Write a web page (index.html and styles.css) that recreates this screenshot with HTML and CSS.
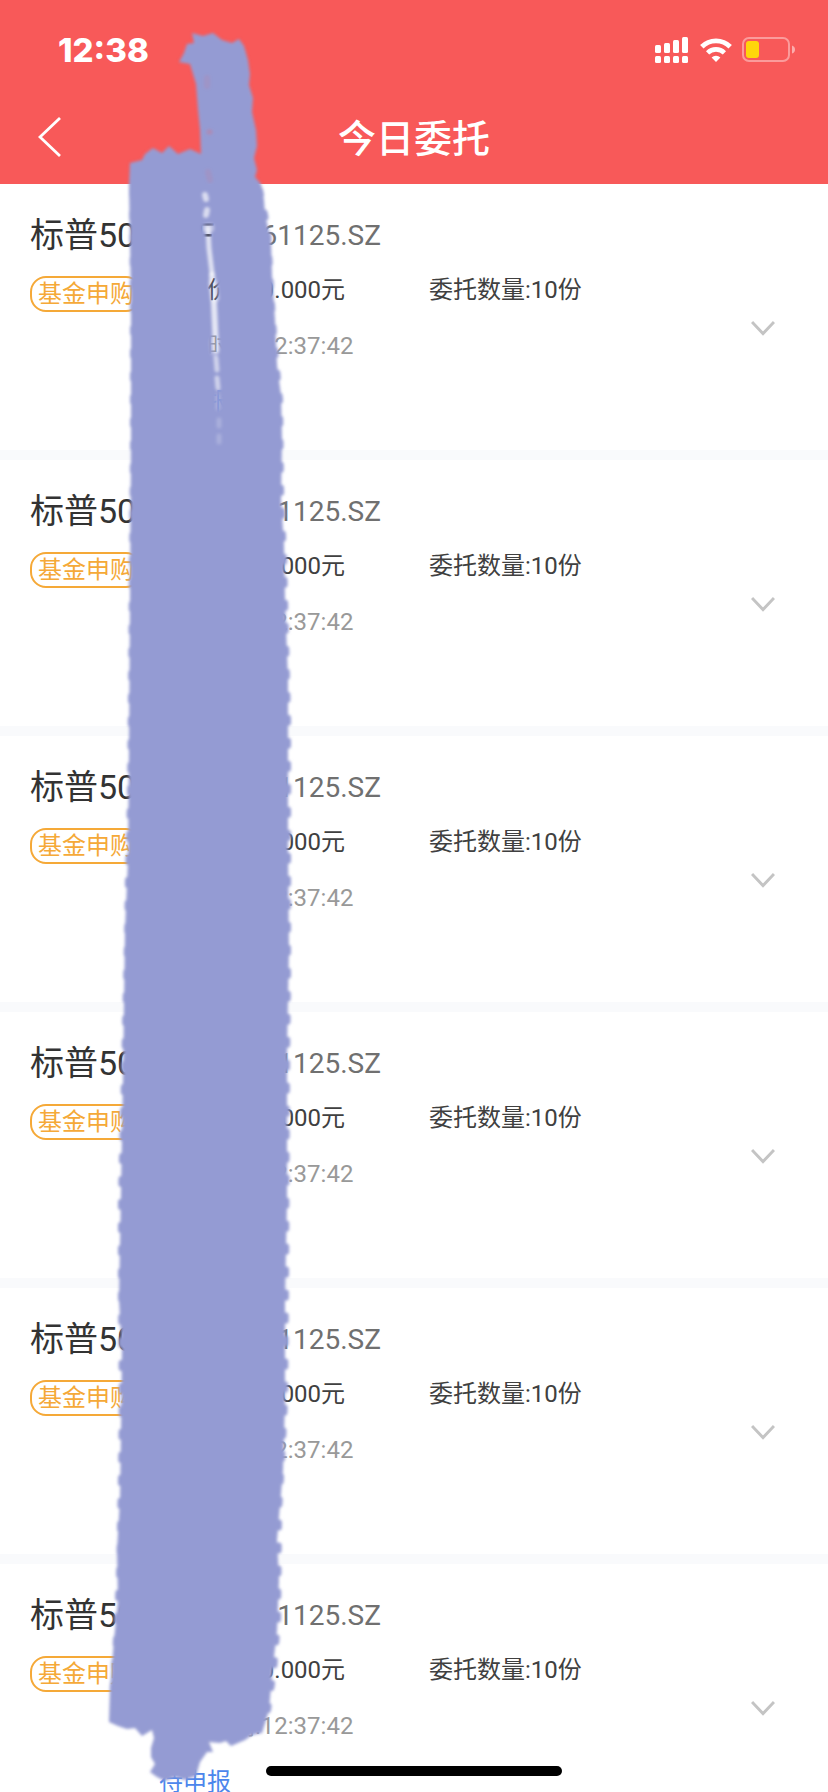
FILE: index.html
```html
<!DOCTYPE html>
<html lang="zh-CN">
<head>
<meta charset="utf-8">
<meta name="viewport" content="width=device-width, initial-scale=1">
<title>今日委托</title>
<link rel="stylesheet" href="styles.css">
</head>
<body>
<div class="screen">
  <header class="header">
    <div class="status-bar">
      <time class="clock">12:38</time>
      <div class="indicators">
        <svg class="signal" width="34" height="27" viewBox="0 0 34 27" fill="#fff" aria-hidden="true">
          <rect x="0" y="8" width="6" height="8" rx="1.5"/><rect x="9" y="6" width="6" height="10" rx="1.5"/><rect x="18" y="3" width="6" height="13" rx="1.5"/><rect x="27" y="0" width="6" height="16" rx="1.5"/>
          <rect x="0" y="19" width="6" height="7" rx="1.5"/><rect x="9" y="19" width="6" height="7" rx="1.5"/><rect x="18" y="19" width="6" height="7" rx="1.5"/><rect x="27" y="19" width="6" height="7" rx="1.5"/>
        </svg>
        <svg class="wifi" width="32" height="24" viewBox="0 0 32 24" aria-hidden="true">
          <path d="M1.8 8.8a20 20 0 0 1 28.4 0" fill="none" stroke="#fff" stroke-width="4.8"/>
          <path d="M7.6 14.8a12 12 0 0 1 16.8 0" fill="none" stroke="#fff" stroke-width="4.6"/>
          <path d="M11.6 19.4a6.4 6.4 0 0 1 8.8 0L16 24z" fill="#fff"/>
        </svg>
        <svg class="battery" width="53" height="26" viewBox="0 0 53 26" aria-hidden="true">
          <rect x="1" y="1" width="46" height="23" rx="6" fill="none" stroke="#fff" stroke-opacity=".4" stroke-width="2"/>
          <rect x="4" y="4" width="13" height="17" rx="3" fill="#ffd60a"/>
          <path d="M50 8.500q3 1 3 4t-3 4z" fill="#fff" fill-opacity=".5"/>
        </svg>
      </div>
    </div>
    <nav class="nav-bar">
      <button class="back" type="button" aria-label="返回">
        <svg width="24" height="42" viewBox="0 0 24 42" fill="none" stroke="#fff" stroke-width="2.800" aria-hidden="true"><path d="M22 2 2 21l20 19"/></svg>
      </button>
      <h1 class="title">今日委托</h1>
    </nav>
  </header>

  <main class="orders">
    <article class="order">
      <h2 class="fund"><span class="name">标普500LOF</span><span class="code">161125.SZ</span></h2>
      <div class="details">
        <span class="badge">基金申购</span>
        <div class="facts"><span>委托价格:0.000元</span><span>委托数量:10份</span><span class="time">委托时间:12:37:42</span><span class="state">待申报</span></div>
        <button class="expand" type="button" aria-label="展开"><svg width="24" height="16" viewBox="0 0 24 16" aria-hidden="true"><path d="M1 2l11 11.500L23 2"/></svg></button>
      </div>
    </article>
    <article class="order">
      <h2 class="fund"><span class="name">标普500LOF</span><span class="code">161125.SZ</span></h2>
      <div class="details">
        <span class="badge">基金申购</span>
        <div class="facts"><span>委托价格:0.000元</span><span>委托数量:10份</span><span class="time">委托时间:12:37:42</span><span class="state">待申报</span></div>
        <button class="expand" type="button" aria-label="展开"><svg width="24" height="16" viewBox="0 0 24 16" aria-hidden="true"><path d="M1 2l11 11.500L23 2"/></svg></button>
      </div>
    </article>
    <article class="order">
      <h2 class="fund"><span class="name">标普500LOF</span><span class="code">161125.SZ</span></h2>
      <div class="details">
        <span class="badge">基金申购</span>
        <div class="facts"><span>委托价格:0.000元</span><span>委托数量:10份</span><span class="time">委托时间:12:37:42</span><span class="state">待申报</span></div>
        <button class="expand" type="button" aria-label="展开"><svg width="24" height="16" viewBox="0 0 24 16" aria-hidden="true"><path d="M1 2l11 11.500L23 2"/></svg></button>
      </div>
    </article>
    <article class="order">
      <h2 class="fund"><span class="name">标普500LOF</span><span class="code">161125.SZ</span></h2>
      <div class="details">
        <span class="badge">基金申购</span>
        <div class="facts"><span>委托价格:0.000元</span><span>委托数量:10份</span><span class="time">委托时间:12:37:42</span><span class="state">待申报</span></div>
        <button class="expand" type="button" aria-label="展开"><svg width="24" height="16" viewBox="0 0 24 16" aria-hidden="true"><path d="M1 2l11 11.500L23 2"/></svg></button>
      </div>
    </article>
    <article class="order">
      <h2 class="fund"><span class="name">标普500LOF</span><span class="code">161125.SZ</span></h2>
      <div class="details">
        <span class="badge">基金申购</span>
        <div class="facts"><span>委托价格:0.000元</span><span>委托数量:10份</span><span class="time">委托时间:12:37:42</span><span class="state">待申报</span></div>
        <button class="expand" type="button" aria-label="展开"><svg width="24" height="16" viewBox="0 0 24 16" aria-hidden="true"><path d="M1 2l11 11.500L23 2"/></svg></button>
      </div>
    </article>
    <article class="order">
      <h2 class="fund"><span class="name">标普500LOF</span><span class="code">161125.SZ</span></h2>
      <div class="details">
        <span class="badge">基金申购</span>
        <div class="facts"><span>委托价格:0.000元</span><span>委托数量:10份</span><span class="time">委托时间:12:37:42</span><span class="state">待申报</span></div>
        <button class="expand" type="button" aria-label="展开"><svg width="24" height="16" viewBox="0 0 24 16" aria-hidden="true"><path d="M1 2l11 11.500L23 2"/></svg></button>
      </div>
    </article>
  </main>

  <!-- Brush stroke drawn over the list -->
  <svg class="brush" width="300" height="1792" viewBox="0 0 300 1792" aria-hidden="true">
    <defs>
      <filter id="soft" filterUnits="userSpaceOnUse" x="80" y="20" width="220" height="1772"><feGaussianBlur stdDeviation="1.600"/></filter>
      <filter id="gap-soft" filterUnits="userSpaceOnUse" x="180" y="60" width="60" height="400"><feGaussianBlur stdDeviation="1.600"/></filter>
      <mask id="gap" maskUnits="userSpaceOnUse" x="0" y="0" width="300" height="1792">
        <rect width="300" height="1792" fill="#fff"/>
        <g fill="none" stroke="#000" stroke-linecap="round" filter="url(#gap-soft)">
          <path d="M205 195l1 4M207 210l-1 5" stroke-width="6" stroke-opacity=".65"/>
          <path d="M208 228l1 20 3 25" stroke-width="5" stroke-opacity=".7"/>
          <path d="M207 228h3" stroke-width="9" stroke-opacity=".4"/>
          <path d="M212 275l2 30 2 45" stroke-width="6" stroke-opacity=".75"/>
          <path d="M213 283l2 15" stroke-width="9" stroke-opacity=".4"/>
          <path d="M214 342l1 10" stroke-width="9" stroke-opacity=".25"/>
          <path d="M216 358l1 12M217 378l1 10" stroke-width="5" stroke-opacity=".55"/>
          <path d="M218 396v12M219 420v6M219 436v6" stroke-width="5" stroke-opacity=".2"/>
          <path d="M207 78v8M208 172l2 8" stroke-width="6" stroke-opacity=".1"/>
          <path d="M209 132h1" stroke-width="5" stroke-opacity=".25"/>
        </g>
      </mask>
    </defs>
    <g mask="url(#gap)"><g filter="url(#soft)" fill="#949bd3" stroke="#949bd3">
      <path stroke="none" d="M130 163L142 160 145 154 153 148 162 153 169 146 178 154 190 149 201 154 200 130 198 110 196 84 190 64 179 62 184 53 187 44 194 43 192 33 203 36 213 33 222 40 232 43 239 39 244 46 248 60 250 74 249 85 253 98 252 112 256 130 257 146 254 158 257 170 255 177 261 184 264 200 265 215 271 240 272 275 275 320 277 365 281 395 282 440 281 500 284 545 285 600 288 680 288 850 289 950 287 1050 287 1200 285 1300 285 1400 283 1470 280 1505 277 1540 279 1580 277 1630 272 1675 269 1710 262 1733 252 1735 245 1740 231 1746 226 1741 220 1743 209 1742 213 1752 207 1752 200 1762 196 1776 185 1780 175 1777 165 1781 157 1777 150 1772 155 1764 151 1757 151 1748 154 1738 152 1730 142 1736 135 1728 127 1729 118 1726 109 1722 110 1690 114 1640 118 1600 117 1550 120 1500 121 1430 122 1350 119 1300 121 1190 123 1080 125 930 128 860 129 750 130 600 131 440 131 300 129 184z"/>
      <path fill="none" stroke-width="6" stroke-linecap="round" stroke-dasharray="5 18" d="M132 190L133 300 133 450 131 700 130 800 128 880 127 940 125 1030 124 1080 121 1200 121 1300 122 1400 121 1480 119 1580 116 1640 112 1700M260 190L268 230 271 290 275 350 280 400 281 490 284 560 286 640 288 720 288 980 287 1060 286 1280 285 1400 282 1460 279 1510 278 1620 274 1670 268 1710"/>
    </g></g>
  </svg>
  <div class="home-indicator"></div>
</div>
</body>
</html>
```

FILE: styles.css
```css
* {
  box-sizing: border-box;
}

body {
  margin: 0;
  background: #fff;
  font-family: Roboto, "Noto Sans CJK SC", sans-serif;
}

button {
  border: 0;
  padding: 0;
  background: none;
  cursor: pointer;
}

svg {
  display: block;
}

.screen {
  position: relative;
  height: 100vh;
  overflow: hidden;
}

.header {
  background: #f85959;
  color: #fff;
}

.status-bar {
  display: flex;
  align-items: center;
  justify-content: space-between;
  height: 100px;
  padding: 0 33px 0 58px;
}

.clock {
  font: 800 33px/40px Inter, sans-serif;
}

.indicators {
  display: flex;
  align-items: center;
  gap: 11px;
}

.battery {
  margin-left: -1px;
}

.nav-bar {
  display: grid;
  grid-template-columns: 80px 1fr 80px;
  align-items: center;
  height: 84px;
  padding-bottom: 6px;
}

.back {
  display: flex;
  align-items: center;
  height: 76px;
  padding: 0 0 4px 38px;
}

.title {
  margin: 0;
  font-size: 38px;
  font-weight: 500;
  line-height: 56px;
  text-align: center;
}

.order {
  padding: 31px 30px 20px;
  border-bottom: 10px solid #f9fafc;
}

.fund {
  display: flex;
  align-items: center;
  gap: 31px;
  margin: 0 0 7px;
  font-weight: 400;
  line-height: 40px;
}

.name {
  color: #333;
  font-size: 34px;
}

.code {
  padding-top: 1px;
  color: #707070;
  font-size: 28px;
  line-height: 39px;
}

.details {
  display: grid;
  grid-template-columns: 129px 1fr 70px;
  align-items: start;
}

.badge {
  justify-self: start;
  margin-top: 14px;
  padding: 0 6px;
  border: 2px solid #f5a938;
  border-radius: 16px;
  color: #f5a938;
  font-size: 24px;
  line-height: 32px;
}

.facts {
  display: grid;
  grid-template-columns: 270px 1fr;
  color: #404040;
  font-size: 24px;
  line-height: 56px;
}

.time,
.state {
  grid-column: 1 / -1;
}

.time {
  color: #999;
}

.state {
  color: #4c86ec;
}

.expand {
  display: flex;
  align-items: center;
  justify-content: center;
  height: 132px;
}

.expand path {
  fill: none;
  stroke: #c4c4c4;
  stroke-width: 3;
}

.brush {
  position: absolute;
  top: 0;
  left: 0;
  pointer-events: none;
}

.home-indicator {
  position: absolute;
  bottom: 16px;
  left: 50%;
  width: 296px;
  height: 10px;
  margin-left: -148px;
  border-radius: 5px;
  background: #000;
}
```
